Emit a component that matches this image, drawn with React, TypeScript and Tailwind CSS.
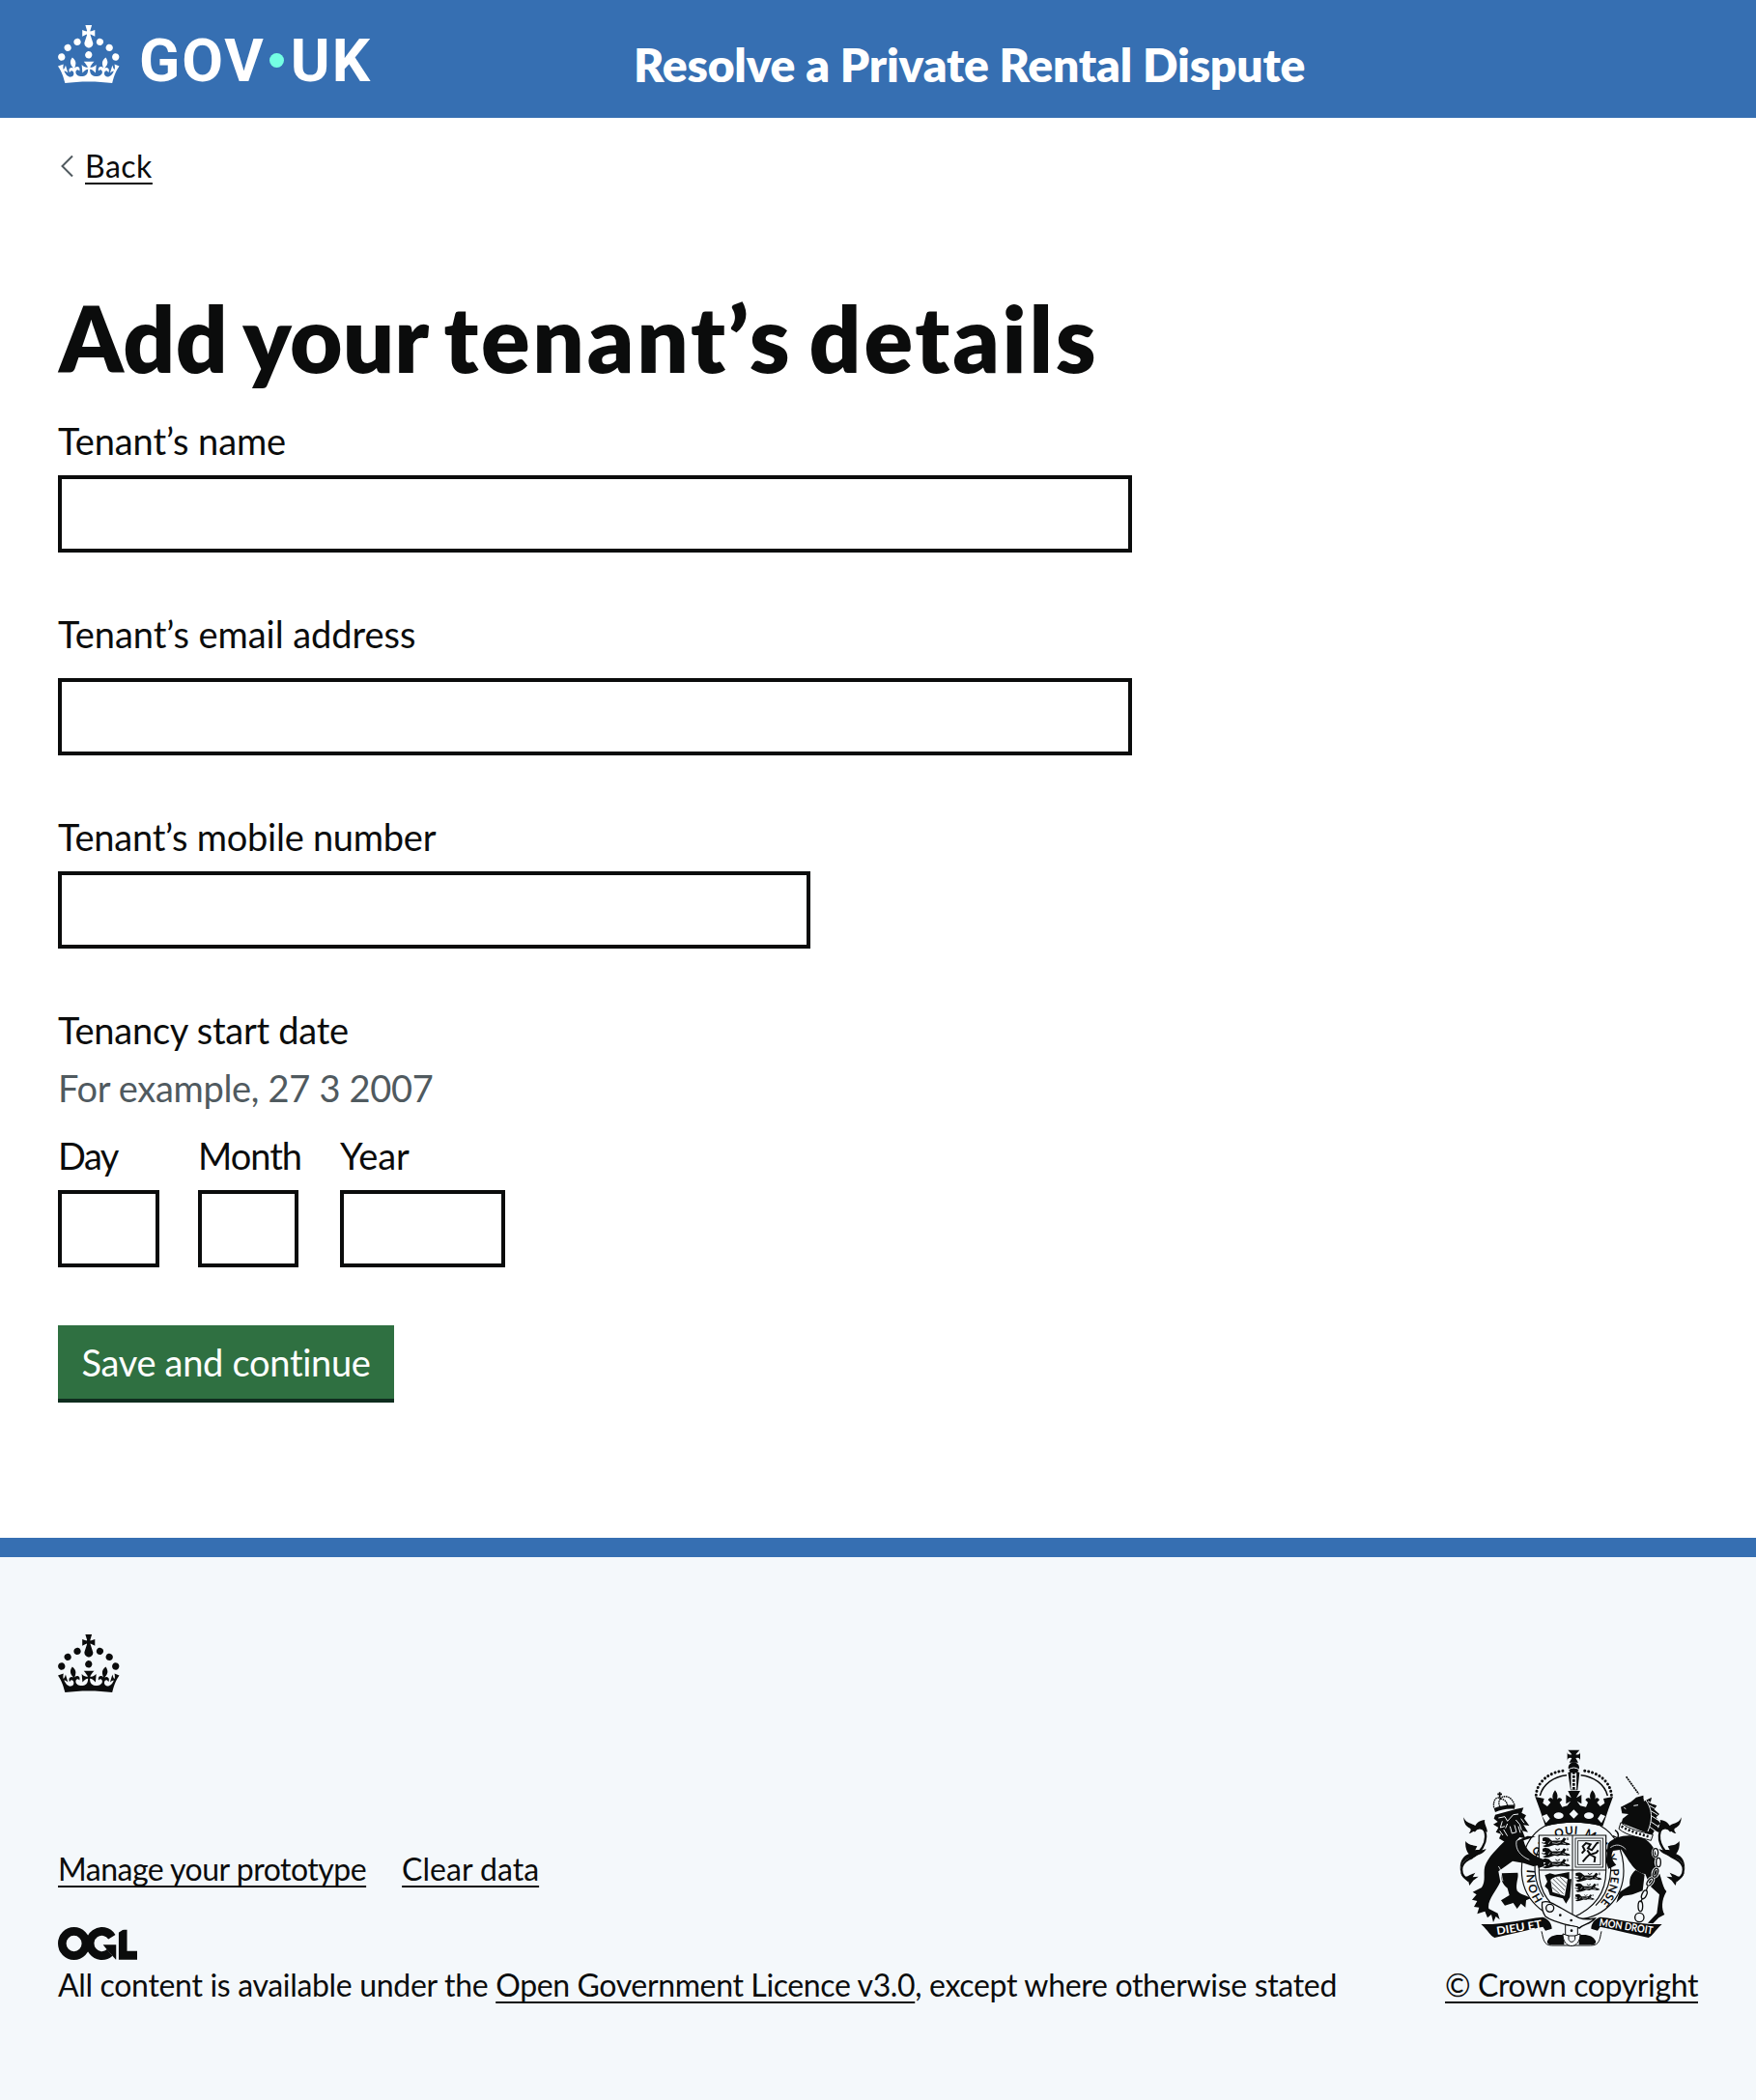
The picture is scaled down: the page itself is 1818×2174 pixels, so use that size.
const CROWN =
  "M22.6 10.4c-1 .4-2-.1-2.4-1-.4-.9.1-2 1-2.4.9-.4 2 .1 2.4 1s-.1 2-1 2.4m-5.9 6.7c-.9.4-2-.1-2.4-1-.4-.9.1-2 1-2.4.9-.4 2 .1 2.4 1s-.1 2-1 2.4m10.8-3.7c-1 .4-2-.1-2.4-1-.4-.9.1-2 1-2.4.9-.4 2 .1 2.4 1s0 2-1 2.4m3.3 4.8c-1 .4-2-.1-2.4-1-.4-.9.1-2 1-2.4.9-.4 2 .1 2.4 1s-.1 2-1 2.4M17 4.7l2.3 1.2V2.5l-2.3.7-.2-.2.9-3h-3.4l.9 3-.2.2c-.1.1-2.3-.7-2.3-.7v3.4L15 4.7c.1.1.1.2.2.2l-1.3 4c-.1.2-.1.4-.1.6 0 1.1.8 2 1.9 2.2h.7c1-.2 1.9-1.1 1.9-2.1 0-.2 0-.4-.1-.6l-1.3-4c-.1-.2 0-.2.1-.3m-7.6 5.7c.9.4 2-.1 2.4-1 .4-.9-.1-2-1-2.4-.9-.4-2 .1-2.4 1s0 2 1 2.4m-5 3c.9.4 2-.1 2.4-1 .4-.9-.1-2-1-2.4-.9-.4-2 .1-2.4 1s.1 2 1 2.4m-3.2 4.8c.9.4 2-.1 2.4-1 .4-.9-.1-2-1-2.4-.9-.4-2 .1-2.4 1s0 2 1 2.4m14.8 11c4.4 0 8.6.3 12.3.8 1.1-4.5 2.4-7 3.7-8.8l-2.5-.9c.2 1.3.3 1.9 0 2.7-.4-.4-.8-1.1-1.1-2.3l-1.2 4c.7-.5 1.3-.8 2-.9-1.1 2.5-2.6 3.1-3.5 3-1.1-.2-1.7-1.2-1.5-2.1.3-1.2 1.5-1.5 2.1-.1 1.1-2.3-.8-3-2-2.3 1.9-1.9 2.1-3.5.6-5.6-2.1 1.6-2.1 3.2-1.2 5.5-1.2-1.4-3.2-.6-2.5 1.6.9-1.4 2.1-.5 1.9.8-.2 1.1-1.7 2.1-3.5 1.9-2.7-.2-2.9-2.1-2.9-3.6.7-.1 1.9.5 2.9 1.9l.4-4.3c-1.1 1.1-2.1 1.4-3.2 1.4.4-1.2 2.1-3 2.1-3h-5.4s1.7 1.9 2.1 3c-1.1 0-2.1-.2-3.2-1.4l.4 4.3c1-1.4 2.2-2 2.9-1.9-.1 1.5-.2 3.4-2.9 3.6-1.9.2-3.4-.8-3.5-1.9-.2-1.3 1-2.2 1.9-.8.7-2.3-1.2-3-2.5-1.6.9-2.2.9-3.9-1.2-5.5-1.5 2-1.3 3.7.6 5.6-1.2-.7-3.1 0-2 2.3.6-1.4 1.8-1.1 2.1.1.2.9-.3 1.9-1.5 2.1-.9.2-2.4-.5-3.5-3 .6 0 1.2.3 2 .9l-1.2-4c-.3 1.1-.7 1.9-1.1 2.3-.3-.8-.2-1.4 0-2.7l-2.9.9C1.3 23 2.6 25.5 3.7 30c3.7-.5 7.9-.8 12.3-.8";

function Crown() {
  return (
    <svg viewBox="0 0 32 30" preserveAspectRatio="none" className="block h-[60px] w-[63.5px] fill-current" aria-hidden="true">
      <path d={CROWN} />
    </svg>
  );
}

function OglLogo() {
  return (
    <svg viewBox="0 0 483.2 195.7" preserveAspectRatio="none" className="block h-[34px] w-[82px]" aria-label="OGL">
      <g fill="none" stroke="currentColor" strokeWidth="50.7">
        <circle cx="97.8" cy="97.8" r="72.4" />
        <path d="M329 59A72.4 72.4 0 1 0 316 152" />
        <path d="M396.1 16V168.2H483.2" />
      </g>
      <path d="M275 105.700H355V193.500H352L299 133.200Z" fill="currentColor" />
      <path d="M365 0V36L425 -2Z" className="fill-[#f4f8fb]" />
    </svg>
  );
}

function Tail() {
  return (
    <g>
      <path d="M92 470C62 450 62 418 92 402C128 386 152 350 142 316C136 300 116 302 108 316" fill="none" stroke="currentColor" strokeWidth="7" />
      <path d="M76 272C84 292 96 288 112 298C120 284 130 282 142 280C138 290 148 300 150 318L138 312L124 306C112 306 108 320 92 322C98 314 100 310 96 306C84 302 76 290 76 272Z" />
      <path d="M82 346C92 360 106 358 118 362L112 374C124 372 134 376 146 370C138 386 118 390 100 396C74 404 66 420 66 440C62 410 74 392 92 386C84 376 80 362 82 346Z" />
      <path d="M66 440C70 456 84 460 94 452L112 444L104 458L122 456L106 468L94 484L90 468C76 462 68 456 66 440Z" />
    </g>
  );
}

function Passant() {
  return (
    <g>
      <path d="M4 4C10 0 24 0 28 8L34 12C46 10 56 14 64 10L70 2L78 6L72 14C76 20 86 16 90 24L80 26L68 24L58 24C50 30 46 22 38 26L24 30L12 32L4 28L16 24L8 20L14 14L4 12Z" />
      <path d="M2 18L10 20M44 4L50 8L58 4M82 2V10" fill="none" stroke="currentColor" strokeWidth="3" />
      <path d="M28 14L22 22M34 18L48 20L60 16M66 18L76 22" fill="none" stroke="#f4f8fb" strokeWidth="2" />
    </g>
  );
}

function RoyalArms() {
  return (
    <svg viewBox="60 55 710 627" className="block h-[209px] w-[236.667px] fill-current" aria-label="Royal coat of arms">
      <defs>
        <path id="garter-ring" d="M322 528A118 126 0 1 1 480 556" />
      </defs>
      {/* St Edward's crown */}
      <path d="M400 63H436L424 77Q438 80 438 68V98Q438 84 424 88L432 102H404L412 88Q398 84 398 98V68Q398 80 412 77Z" />
      <circle cx="418" cy="118" r="17" />
      <path d="M400 133Q418 122 436 133L430 188H408Z" />
      <path d="M418 134V186" stroke="#f4f8fb" strokeWidth="17" />
      <path d="M418 130V186" stroke="currentColor" strokeWidth="8" strokeDasharray="8 4" />
      <path d="M401 124Q418 112 435 124" fill="none" stroke="#f4f8fb" strokeWidth="3" />
      <g fill="none" stroke="currentColor">
        <path d="M301 203C304 160 345 130 390 127M535 203C532 160 491 130 446 127" strokeWidth="9" strokeLinecap="round" strokeDasharray="0.100 12" />
        <path d="M313 205C322 170 356 145 396 141M523 205C514 170 480 145 440 141" strokeWidth="4.500" />
      </g>
      <path d="M298 208L326 214L322 228L336 238L346 226L338 218C344 208 350 212 353 216C350 204 354 196 360 188C366 196 370 204 366 216C372 210 378 210 382 218L374 226L382 240L398 236L408 222L394 230V202L410 212L400 190H438L426 212L442 202V230L428 222L438 236L456 240L462 226L454 218C458 210 466 210 470 216C466 204 470 196 476 188C482 196 488 204 484 216C488 210 494 210 498 218L490 226L500 238L514 228L510 214L540 208L526 246L508 300C450 284 386 284 330 300L312 246Z" />
      <g className="fill-[#f4f8fb]">
        <path d="M320 268L334 262L344 276L332 290ZM516 268L502 262L492 276L504 290ZM418 248L432 262L418 276L404 262Z" />
        <ellipse cx="371" cy="267" rx="15" ry="10" />
        <ellipse cx="465" cy="267" rx="15" ry="10" />
      </g>
      {/* Garter */}
      <g fill="none" stroke="currentColor" strokeWidth="3.500">
        <path d="M330 298C280 324 256 376 256 436C256 520 320 590 414 590C508 590 573 524 573 438C573 376 546 322 500 298" />
        <path d="M330 298C385 284 450 284 504 298" />
        <path d="M310 370C290 410 292 470 324 520M518 370C546 420 534 500 486 546" />
      </g>
      <text className="font-['Lato'] font-bold" fontSize="35" letterSpacing="1.500" wordSpacing="9">
        <textPath href="#garter-ring" startOffset="0">HONI SOIT QUI MAL Y PENSE</textPath>
      </text>
      {/* Shield */}
      <path d="M310 328H518V440C518 520 470 560 414 584C358 560 310 520 310 440Z" fill="#f4f8fb" stroke="currentColor" strokeWidth="3.500" />
      <path d="M414 328V584M310 436H518" stroke="currentColor" strokeWidth="3" />
      <g transform="translate(317 333)"><Passant /></g>
      <g transform="translate(317 366)"><Passant /></g>
      <g transform="translate(317 399)"><Passant /></g>
      <g transform="translate(420 442) scale(.95)"><Passant /></g>
      <g transform="translate(420 476) scale(.88)"><Passant /></g>
      <g transform="translate(420 510) scale(.7)"><Passant /></g>
      <g fill="none" stroke="currentColor">
        <rect x="423" y="337" width="86" height="90" strokeWidth="2.500" />
        <rect x="431" y="345" width="70" height="74" strokeWidth="2.500" />
        <path d="M443 384L452 374L446 362L456 352L470 356L462 368L474 374L490 352L496 350M460 374L470 388L488 382L494 374M468 386L456 398L446 410M470 388L484 396L482 412" strokeWidth="6" />
      </g>
      <path d="M328 452L344 446L360 450L404 442V464H411L406 520L394 540L384 524L344 514L338 496L328 486L336 472Z" />
      <path d="M346 466C360 452 382 452 399 464L390 516L352 504Z" className="fill-[#f4f8fb]" />
      <path d="M349 474L386 510M354 464L390 499M363 459L393 488M375 457L396 477M351 490L374 510" stroke="currentColor" strokeWidth="2" />
      {/* Lion */}
      <path d="M188 194V212M181 200H195" stroke="currentColor" strokeWidth="5" />
      <path d="M170 242C166 216 180 206 190 214C204 200 226 208 234 234M190 214C184 222 184 234 190 240M190 214C204 216 212 226 212 238" fill="none" stroke="currentColor" strokeWidth="4" strokeDasharray="5 2" />
      <path d="M170 244C190 236 212 232 236 234L234 246C212 244 192 248 174 256Z" />
      <path d="M174 264L240 246L262 242L256 258L270 266L264 276L280 298L262 296L276 318L258 314L268 338L250 334L236 348L206 350L186 338L192 324L176 318L184 304L168 294L182 286L170 276Z" />
      <g fill="none" stroke="#f4f8fb" strokeWidth="3">
        <path d="M184 274L204 270L212 284L230 264L246 262M196 284L190 304L204 300M238 280L250 294L256 312M212 292L206 306M220 300L226 322L240 318L234 296M200 310L212 330M246 300L252 320M254 276L264 290M188 314L198 328" />
      </g>
      <path d="M210 340C182 366 150 398 142 424C136 446 146 468 132 490L104 504L116 512L102 528L118 532L108 550L124 552L118 572L142 564L150 584L162 574L168 598L176 580L188 590L182 570L154 556C148 530 178 500 190 472L184 440L228 408L262 414L292 424L306 422L308 430L326 424L322 402C294 392 270 378 262 344L300 332L274 330L240 346Z" />
      <path d="M194 446L244 444C248 460 236 478 242 500C252 514 274 514 284 524L270 530L268 552L254 540L242 556L230 538L204 546L192 530L218 514L212 492C198 482 190 466 194 446Z" />
      <path d="M184 424C196 440 192 456 198 470M240 346C236 372 252 392 280 404" fill="none" stroke="#f4f8fb" strokeWidth="2.500" />
      <Tail />
      <g transform="translate(828 0) scale(-1 1)"><Tail /></g>
      {/* Unicorn */}
      <path d="M581 146L620 200" stroke="currentColor" strokeWidth="5" strokeDasharray="6 2" />
      <path d="M564 240L596 224L612 210L634 204L636 222L660 210L656 228L676 236L668 248L684 262L674 272L688 292L678 298L684 318L668 314L660 332L638 318L566 290L570 276L588 262L568 260Z" />
      <path d="M636 212C666 246 662 282 648 316M604 236L618 234M574 242L580 246M648 222L664 230M654 236L672 246M658 252L678 264M660 268L682 282M658 286L682 302M654 302L674 316" fill="none" stroke="#f4f8fb" strokeWidth="3" />
      <path d="M564 288C590 310 630 318 664 326L658 344C620 334 584 330 558 308Z" fill="#f4f8fb" stroke="currentColor" strokeWidth="3" />
      <path d="M566 300C596 318 626 324 656 334" fill="none" stroke="currentColor" strokeWidth="8" strokeDasharray="6 6" />
      <path d="M524 354C550 326 600 322 640 340C668 358 682 392 676 432C692 452 690 484 706 502C690 530 690 556 700 574L682 584L664 602L648 600L676 570L684 512L656 486L640 448C606 444 590 406 566 372L540 376C532 392 536 404 550 420L526 432L518 410Z" />
      <path d="M532 366C548 354 566 356 580 372" fill="none" stroke="#f4f8fb" strokeWidth="2.500" />
      <path d="M610 436L638 450L632 500L600 512L572 516L550 538L560 504L592 484C590 462 596 448 610 436Z" />
      <g fill="none" stroke="#f4f8fb" strokeWidth="9">
        <ellipse cx="672" cy="382" rx="8" ry="13" />
        <ellipse cx="681" cy="412" rx="8" ry="14" />
        <ellipse cx="672" cy="444" rx="8" ry="14" transform="rotate(20 672 444)" />
        <ellipse cx="655" cy="472" rx="7" ry="14" transform="rotate(35 655 472)" />
      </g>
      <g fill="none" stroke="currentColor" strokeWidth="4">
        <ellipse cx="672" cy="382" rx="8" ry="13" />
        <ellipse cx="681" cy="412" rx="7" ry="14" />
        <ellipse cx="672" cy="444" rx="7" ry="14" transform="rotate(20 672 444)" />
        <ellipse cx="655" cy="472" rx="7" ry="14" transform="rotate(35 655 472)" />
        <ellipse cx="637" cy="512" rx="7" ry="14" transform="rotate(25 637 512)" />
        <path d="M648 486L643 500M631 524L626 536" />
        <ellipse cx="625" cy="548" rx="7" ry="16" />
        <circle cx="622" cy="583" r="14" />
        <path d="M546 312C560 320 560 336 546 344M540 330L562 340" />
      </g>
      {/* Scroll and buckle */}
      <path d="M130 604C200 606 260 588 322 582C340 588 350 602 350 618L330 624L322 612C270 622 220 636 172 646C158 640 154 626 130 604Z" />
      <path d="M692 604C622 606 562 588 500 582C482 588 472 602 472 618L492 624L500 612C552 622 602 636 650 646C664 640 668 626 692 604Z" />
      <path d="M318 626C324 650 324 670 350 670H470C500 670 498 650 504 626" fill="none" stroke="currentColor" strokeWidth="3" />
      <path d="M336 656C344 640 360 634 388 638V668H350C340 668 334 664 336 656ZM486 656C478 640 460 634 434 638V668H472C482 668 488 664 486 656Z" />
      <path d="M320 536C346 526 372 554 434 584C456 592 470 588 484 586C470 604 446 604 436 616C400 606 352 598 330 580C318 562 318 550 320 536Z" fill="#f4f8fb" stroke="currentColor" strokeWidth="4" />
      <path d="M392 606V640H430V612Z" fill="#f4f8fb" stroke="currentColor" strokeWidth="3" />
      <path d="M384 634C384 684 438 684 438 634L422 640V650C418 662 404 662 402 650V640Z" fill="#f4f8fb" stroke="currentColor" strokeWidth="3" />
      <circle cx="344" cy="554" r="12" fill="none" stroke="currentColor" strokeWidth="4" />
      <circle cx="376" cy="576" r="4" />
      <circle cx="410" cy="592" r="4" />
      <circle cx="411" cy="624" r="4" />
      <text x="180" y="637" transform="rotate(-9 180 637)" textLength="142" lengthAdjust="spacingAndGlyphs" className="fill-white font-['Lato'] font-bold" fontSize="34">DIEU ET</text>
      <text x="496" y="609" transform="rotate(9 496 609)" textLength="168" lengthAdjust="spacingAndGlyphs" className="fill-white font-['Lato'] font-bold" fontSize="33">MON DROIT</text>
    </svg>
  );
}

const LINK = "underline decoration-2 underline-offset-[5px] [text-decoration-skip-ink:none]";
const BOX = "block h-20 border-4 border-[#0b0c0c] bg-white outline-none";

function Label({ children, className }: { children: string; className: string }) {
  return <label className={`block h-[50px] whitespace-nowrap pt-px text-[38px] leading-[50px] ${className}`}>{children}</label>;
}

export default function App() {
  return (
    <div className="flex min-h-[2174px] w-[1818px] flex-col bg-white font-['Lato',sans-serif] text-[#0b0c0c]">
      <header className="flex h-[122px] bg-[#366fb2] text-white">
        <a className="flex w-[598px] pl-[60px] pt-[26px]">
          <Crown />
          <span className="ml-[20.500px] mt-px flex font-['Roboto',sans-serif] text-[62px] font-bold leading-[72px]">
            <span className="tracking-[2px]">GOV</span>
            <span className="ml-[4px] mr-[7px] mt-[28px] size-[15px] shrink-0 rounded-full bg-[#74ffe3]" />
            <span className="tracking-[2px]">UK</span>
          </span>
        </a>
        <span className="mt-[37px] whitespace-nowrap pl-[58px] text-[48px] font-extrabold leading-[60px] tracking-[-0.17px]">Resolve a Private Rental Dispute</span>
      </header>

      <main className="flex flex-col items-start px-[60px] pb-[140px] pt-[29px]">
        <a className="flex h-10 items-center text-[32px] leading-10">
          <svg viewBox="0 0 14 24" className="ml-[2px] mr-3 mt-[2px] h-6 w-[14px]" aria-hidden="true">
            <path d="M13 1.500L2.500 12L13 22.500" fill="none" stroke="#505a5f" strokeWidth="2" />
          </svg>
          <span className={`pt-px tracking-[0.5px] ${LINK}`}>Back</span>
        </a>
        <h1 className="mb-[30px] ml-px mt-[109px] h-[100px] whitespace-nowrap text-[94px] font-extrabold leading-[100px] [word-spacing:-4.500px]">
          <span className="tracking-[0.5px]">Add</span> <span>your</span> <span className="tracking-[2.8px]">tenant’s</span> <span className="tracking-[2.8px]">details</span>
        </h1>

        <Label className="tracking-[-0.1px]">Tenant’s name</Label>
        <input className={`mt-3 w-[1112px] ${BOX}`} />
        <div className="h-[58px]" />
        <Label className="tracking-[-0.05px]">Tenant’s email address</Label>
        <input className={`mt-[22px] w-[1112px] ${BOX}`} />
        <div className="h-[58px]" />
        <Label className="tracking-[-0.25px]">Tenant’s mobile number</Label>
        <input className={`mt-3 w-[779px] ${BOX}`} />
        <div className="h-[58px]" />
        <Label className="tracking-[-0.25px]">Tenancy start date</Label>
        <p className="mt-[10px] h-[50px] pt-px text-[38px] leading-[50px] tracking-[-0.32px] text-[#505a5f]">For example, 27 3 2007</p>
        <div className="mt-5 flex">
          <div className="mr-10 w-[105px]">
            <Label className="tracking-[-1.5px]">Day</Label>
            <input className={`mt-3 w-[105px] ${BOX}`} />
          </div>
          <div className="mr-[43px] w-[104px]">
            <Label className="tracking-[-1px]">Month</Label>
            <input className={`mt-3 w-[104px] ${BOX}`} />
          </div>
          <div>
            <Label className="tracking-[-0.2px]">Year</Label>
            <input className={`mt-3 w-[171px] ${BOX}`} />
          </div>
        </div>
        <button className="mb-1 mt-[60px] h-[76px] w-[348px] whitespace-nowrap bg-[#2f7041] text-[38px] leading-[50px] tracking-[-0.3px] text-white shadow-[0_4px_0_#0f2d1e]">Save and continue</button>
      </main>

      <footer className="flex grow flex-col border-t-[20px] border-[#366fb2] bg-[#f4f8fb] px-[60px] pb-[99px] pt-20 text-[32px] leading-10">
        <Crown />
        <div className="flex grow items-end justify-between">
          <div>
            <div className="mb-[40px] flex gap-[37px]">
              <a className={`tracking-[-0.5px] ${LINK}`}>Manage your prototype</a>
              <a className={`tracking-[0.01px] ${LINK}`}>Clear data</a>
            </div>
            <OglLogo />
            <p className="mt-[6px] whitespace-pre tracking-[-0.32px]">
              All content is available under the <a className={`tracking-[-0.37px] ${LINK}`}>Open Government Licence v3.0</a>, except where otherwise stated
            </p>
          </div>
          <div className="flex flex-col items-end">
            <div className="mr-[11px]">
              <RoyalArms />
            </div>
            <a className={`mt-[17px] whitespace-nowrap tracking-[-0.38px] ${LINK}`}>© Crown copyright</a>
          </div>
        </div>
      </footer>
    </div>
  );
}
